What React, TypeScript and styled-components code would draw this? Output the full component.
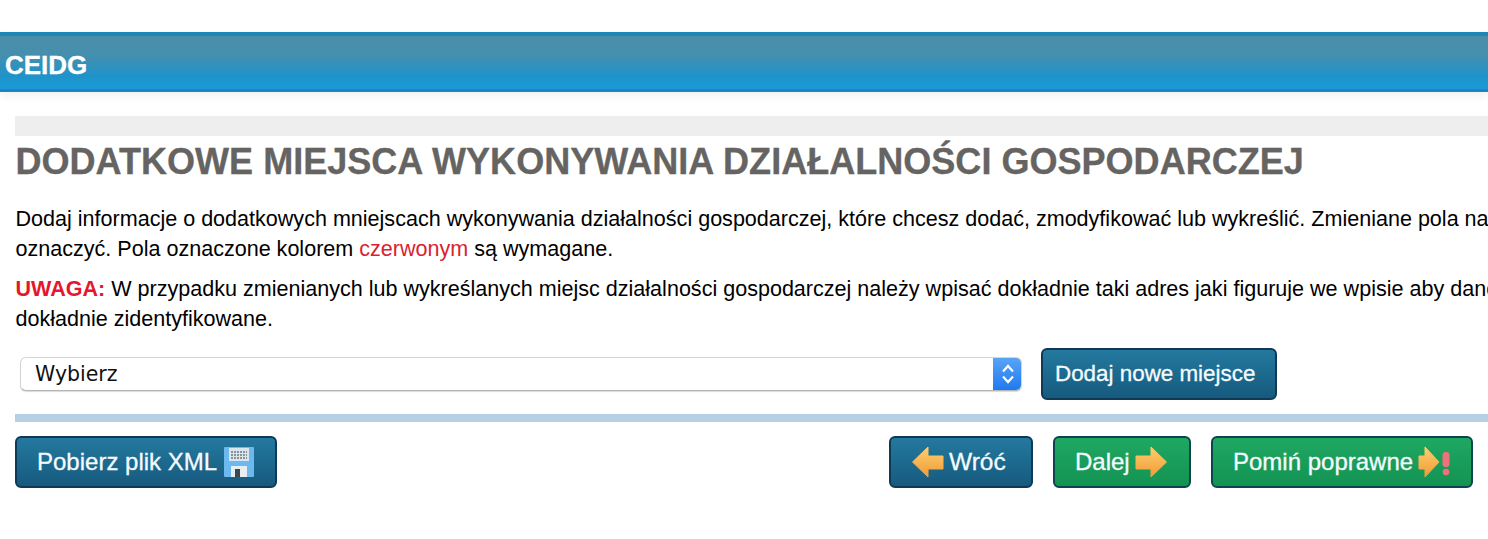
import React from "react";
import styled, { createGlobalStyle, css } from "styled-components";

const Global = createGlobalStyle`
  html, body { margin: 0; padding: 0; background: #fff; overflow: hidden; }
  body { font-family: "Liberation Sans", Arial, sans-serif; }
`;

const Page = styled.div`
  width: 1488px;
  height: 539px;
  padding-top: 32px;
  box-sizing: border-box;
  overflow: hidden;
`;

const Header = styled.header`
  height: 60px;
  box-sizing: border-box;
  border-top: 4px solid #1f87b8;
  border-bottom: 3px solid #1a86bd;
  background: linear-gradient(#4a8eaa 0%, #458fae 35%, #1f93c9 75%, #1b9ad8 100%);
  box-shadow: 0 4px 8px rgba(0, 0, 0, 0.06);
  display: flex;
  align-items: center;
  padding: 5px 0 0 5px;
  color: #fff;
  font-size: 26px;
  font-weight: bold;
  -webkit-text-stroke: 0.3px #fff;
`;

const Content = styled.main`
  padding: 24px 0 0 15px;
`;

const GreyBar = styled.div`
  height: 20px;
  background: #eeeeee;
`;

const Title = styled.h1`
  margin: 0;
  padding-left: 0.5px;
  height: 52px;
  line-height: 52px;
  font-size: 36.05px;
  font-weight: bold;
  color: #666462;
  white-space: nowrap;
  -webkit-text-stroke: 0.3px #666462;
`;

const Paragraph = styled.p`
  margin: 0 0 10px 0;
  padding: 0 0 0 0.5px;
  font-size: 21.55px;
  line-height: 30px;
  color: #000;
  white-space: nowrap;
`;

const Intro = styled(Paragraph)`
  margin-top: 16px;
`;

const Required = styled.span`
  color: #d8232f;
`;

const Warning = styled.strong`
  color: #e5162d;
`;

const SelectRow = styled.div`
  display: flex;
  align-items: center;
  margin-top: 14px;
  height: 52px;
  padding-left: 5px;
  gap: 19px;
`;

const Select = styled.div`
  width: 1002px;
  height: 34px;
  box-sizing: border-box;
  display: flex;
  align-items: center;
  justify-content: space-between;
  border: 1px solid #d4d4d4;
  border-bottom-color: #b5b5b5;
  border-radius: 6px;
  box-shadow: 0 1px 1px rgba(0, 0, 0, 0.15);
  background: #fff;
  font-family: "DejaVu Sans", sans-serif;
  font-size: 20.5px;
  color: #111;
  padding-left: 14px;
  overflow: hidden;
`;

const SelectArrows = styled.span`
  width: 29px;
  height: 34px;
  margin-right: -1px;
  display: flex;
  align-items: center;
  justify-content: center;
  background: linear-gradient(#5aa5f5, #1e78f0);
`;

const Divider = styled.div`
  height: 8px;
  margin-top: 14px;
  background: #b5cfe4;
`;

const ButtonRow = styled.div`
  display: flex;
  justify-content: space-between;
  margin-top: 14px;
  padding-right: 15px;
`;

const ButtonGroup = styled.div`
  display: flex;
  gap: 20px;
`;

const Button = styled.button<{ $width: number; $tone?: "blue" | "green"; $inset?: number; $size?: number }>`
  width: ${(p) => p.$width}px;
  height: 52px;
  box-sizing: border-box;
  display: flex;
  align-items: center;
  justify-content: flex-start;
  gap: 4px;
  padding: 0 0 0 ${(p) => p.$inset ?? 20}px;
  border: 2px solid #0f3a57;
  border-radius: 6px;
  color: #f4fbff;
  font-family: "Liberation Sans", Arial, sans-serif;
  font-size: ${(p) => p.$size ?? 24}px;
  -webkit-text-stroke: 0.3px #f4fbff;
  ${(p) =>
    p.$tone === "green"
      ? css`
          background: linear-gradient(#1fa862, #139352);
          border-color: #0e4450;
        `
      : css`
          background: linear-gradient(#24799f, #165a7e);
        `}
`;

const FloppySvg = styled.svg`
  margin-left: 2px;
`;

const ArrowGradient = ({ id }: { id: string }) => (
  <defs>
    <linearGradient id={id} x1="0" y1="0" x2="0" y2="1">
      <stop offset="0" stopColor="#fbcf70" />
      <stop offset="1" stopColor="#f39a34" />
    </linearGradient>
  </defs>
);

const ArrowLeft = () => (
  <svg width="34" height="34" viewBox="0 0 34 34">
    <ArrowGradient id="al" />
    <path d="M1.5 17 L17 2 V11 H32 V24 H17 V32 Z" fill="url(#al)" stroke="url(#al)" strokeLinejoin="round" />
  </svg>
);

const ArrowRight = () => (
  <svg width="34" height="34" viewBox="0 0 34 34">
    <ArrowGradient id="ar" />
    <path d="M32.5 17 L17 2 V11 H2 V24 H17 V32 Z" fill="url(#ar)" stroke="url(#ar)" strokeLinejoin="round" />
  </svg>
);

const SkipIcon = () => (
  <svg width="34" height="34" viewBox="0 0 34 34">
    <ArrowGradient id="sk" />
    <path d="M22 17 L8 2 V11 H2 V24 H8 V32 Z" fill="url(#sk)" stroke="url(#sk)" strokeLinejoin="round" />
    <rect x="25.5" y="7" width="7" height="15" rx="3" fill="#f0707c" />
    <circle cx="29" cy="27" r="3.3" fill="#f0707c" />
  </svg>
);

const FloppyIcon = () => (
  <FloppySvg width="32" height="32" viewBox="0 0 32 32">
    <rect x="1" y="1" width="30" height="30" rx="1" fill="#6db8ee" />
    <rect x="6" y="2" width="20" height="13" fill="#dbe6ec" />
    <path d="M8 6h16M8 9h16M8 12h16" stroke="#6c7a86" strokeWidth="1.4" strokeDasharray="2 1" />
    <rect x="8" y="20" width="16" height="11" fill="#e6eef2" />
    <rect x="12" y="23" width="5" height="8" fill="#3a4650" />
  </FloppySvg>
);

export default function App() {
  return (
    <Page>
      <Global />
      <Header>CEIDG</Header>
      <Content>
        <GreyBar />
        <Title>DODATKOWE MIEJSCA WYKONYWANIA DZIAŁALNOŚCI GOSPODARCZEJ</Title>
        <Intro>
          Dodaj informacje o dodatkowych mniejscach wykonywania działalności gospodarczej, które chcesz dodać, zmodyfikować lub wykreślić. Zmieniane pola należy
          <br />
          oznaczyć. Pola oznaczone kolorem <Required>czerwonym</Required> są wymagane.
        </Intro>
        <Paragraph>
          <Warning>UWAGA:</Warning> W przypadku zmienianych lub wykreślanych miejsc działalności gospodarczej należy wpisać dokładnie taki adres jaki figuruje we wpisie aby dane
          <br />
          dokładnie zidentyfikowane.
        </Paragraph>
        <SelectRow>
          <Select>
            Wybierz
            <SelectArrows>
              <svg width="14" height="22" viewBox="0 0 14 22" fill="none" stroke="#fff" strokeWidth="2.2">
                <path d="M2 8.5 L7 3 L12 8.5" />
                <path d="M2 13.5 L7 19 L12 13.5" />
              </svg>
            </SelectArrows>
          </Select>
          <Button $width={236} $inset={12} $size={22.4}>Dodaj nowe miejsce</Button>
        </SelectRow>
        <Divider />
        <ButtonRow>
          <Button $width={262}>
            Pobierz plik XML <FloppyIcon />
          </Button>
          <ButtonGroup>
            <Button $width={144} $size={24.5}>
              <ArrowLeft /> Wróć
            </Button>
            <Button $width={138} $tone="green">
              Dalej <ArrowRight />
            </Button>
            <Button $width={262} $tone="green">
              Pomiń poprawne <SkipIcon />
            </Button>
          </ButtonGroup>
        </ButtonRow>
      </Content>
    </Page>
  );
}
